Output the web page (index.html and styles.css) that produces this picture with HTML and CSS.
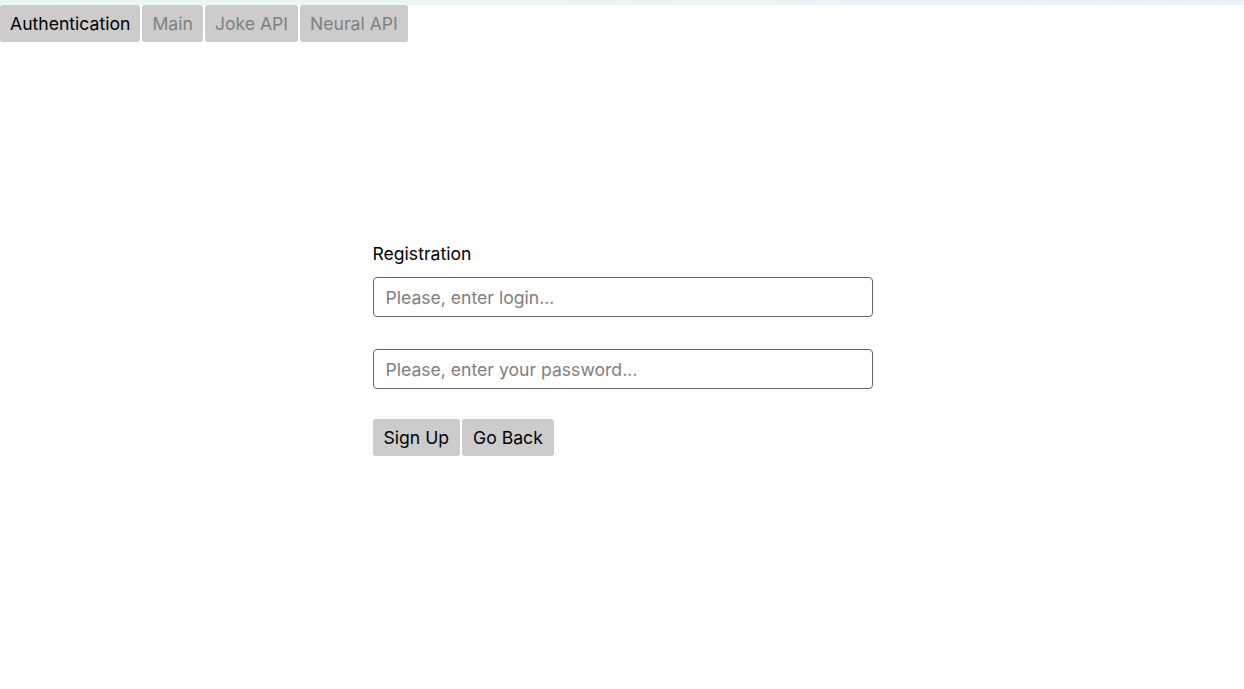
FILE: index.html
```html
<!DOCTYPE html>
<html lang="en">
<head>
<meta charset="utf-8">
<title>Registration</title>
<link rel="stylesheet" href="styles.css">
</head>
<body>
<div class="topbar"></div>
<nav class="tabs">
  <button class="tab active">Authentication</button>
  <button class="tab">Main</button>
  <button class="tab">Joke API</button>
  <button class="tab">Neural API</button>
</nav>
<main class="content">
  <form class="form">
    <label class="title">Registration</label>
    <input class="field" type="text" placeholder="Please, enter login...">
    <input class="field second" type="password" placeholder="Please, enter your password...">
    <div class="actions">
      <button type="button" class="btn">Sign Up</button>
      <button type="button" class="btn">Go Back</button>
    </div>
  </form>
</main>
</body>
</html>
```
FILE: styles.css
```css
* { box-sizing: border-box; }
html, body { margin: 0; padding: 0; background: #fff; }
body { font-family: Inter, "Noto Sans", sans-serif; color: #000; }
.topbar {
  height: 5px;
  background: linear-gradient(90deg, #e5f7f5, #e8f6f4 50%, #ebf3fb);
}
.tabs { display: flex; gap: 2px; }
.tab {
  font-family: inherit;
  font-size: 17.6px;
  height: 37px;
  padding: 0 10px;
  border: none;
  border-radius: 3px;
  background: #cccccc;
  color: #808080;
  cursor: pointer;
}
.tab.active { color: #000; }
.content { display: flex; justify-content: center; padding-top: 201px; padding-right: 1px; }
.form { width: 500px; display: flex; flex-direction: column; margin-left: 2px; }
.title { font-size: 17.6px; line-height: 22px; margin-bottom: 12px; }
.field {
  font-family: inherit;
  font-size: 17.6px;
  height: 40px;
  border: 1px solid #666;
  border-radius: 4px;
  padding: 0 12px;
  color: #000;
  outline: none;
}
.field::placeholder { color: #808080; }
.field.second { margin-top: 32px; }
.actions { display: flex; gap: 2px; margin-top: 30px; }
.btn {
  font-family: inherit;
  font-size: 17.6px;
  height: 37px;
  padding: 0 11px;
  border: none;
  border-radius: 3px;
  background: #cccccc;
  color: #000;
  cursor: pointer;
}
```
